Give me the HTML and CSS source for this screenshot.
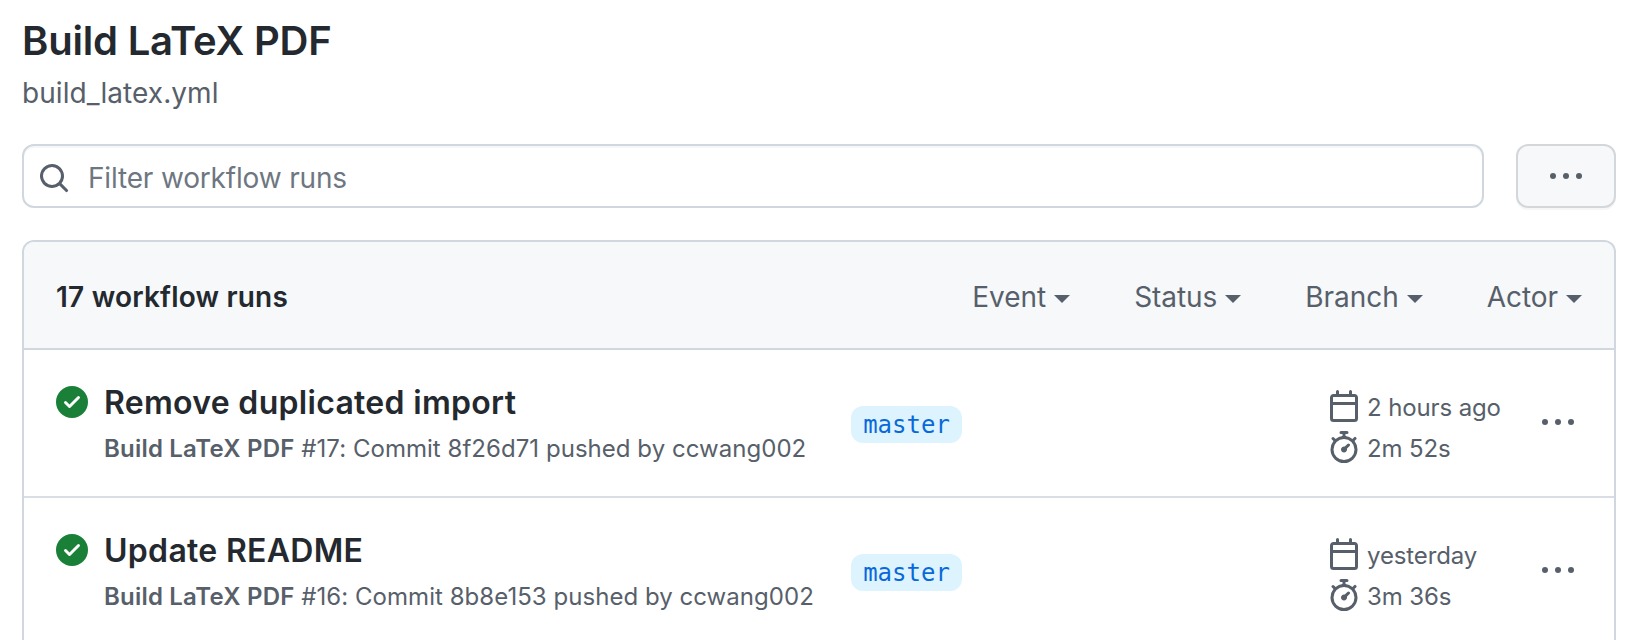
FILE: index.html
```html
<!DOCTYPE html>
<html lang="en">
<head>
<meta charset="utf-8">
<title>Build LaTeX PDF</title>
<link rel="stylesheet" href="styles.css">
</head>
<body>
<svg class="sprite" aria-hidden="true">
  <symbol id="search" viewBox="0 0 16 16"><path fill-rule="evenodd" d="M11.5 7a4.499 4.499 0 11-8.998 0A4.499 4.499 0 0111.5 7zm-.82 4.74a6 6 0 111.06-1.06l3.04 3.04a.75.75 0 11-1.06 1.06l-3.04-3.04z"/></symbol>
  <symbol id="kebab" viewBox="0 0 16 16"><circle cx="1.5" cy="7.5" r="1.5"/><circle cx="8" cy="7.5" r="1.5"/><circle cx="14.5" cy="7.5" r="1.5"/></symbol>
  <symbol id="check" viewBox="0 0 16 16"><path fill-rule="evenodd" d="M8 16A8 8 0 108 0a8 8 0 000 16zm3.78-9.72a.75.75 0 00-1.06-1.06L6.75 9.19 5.28 7.72a.75.75 0 00-1.06 1.06l2 2a.75.75 0 001.06 0l4.5-4.5z"/></symbol>
  <symbol id="calendar" viewBox="0 0 16 16"><path fill-rule="evenodd" d="M4.75 0a.75.75 0 01.75.75V2h5V.75a.75.75 0 011.5 0V2h1.25c.966 0 1.75.784 1.75 1.75v10.5A1.75 1.75 0 0113.250 16H2.75A1.75 1.75 0 011 14.25V3.75C1 2.784 1.784 2 2.75 2H4V.75A.75.75 0 014.75 0zm0 3.5h-2a.25.25 0 00-.25.25V6h11V3.75a.25.25 0 00-.25-.25h-8.5zm8.75 4h-11v6.75c0 .138.112.25.25.25h10.500a.25.25 0 00.25-.25V7.500z"/></symbol>
  <symbol id="stopwatch" viewBox="0 0 16 16"><path fill-rule="evenodd" d="M5.75.75A.75.75 0 016.500 0h3a.75.75 0 010 1.500h-.75v1l-.001.041a6.718 6.718 0 013.464 1.435l.007-.006.75-.75a.75.75 0 111.060 1.060l-.75.75-.006.007a6.750 6.750 0 11-10.548 0L2.720 5.030l-.75-.75a.75.75 0 011.060-1.060l.75.75.007.006A6.718 6.718 0 017.250 2.541V1.500H6.500a.75.75 0 01-.75-.75zM8 14.500A5.250 5.250 0 108 4a5.250 5.250 0 000 10.500zm.389-6.700l1.330-1.330a.75.75 0 111.061 1.060L9.450 8.861A1.502 1.502 0 018 10.750a1.500 1.500 0 11.389-2.950z"/></symbol>
</svg>
<main class="page">
  <h1 class="title">Build LaTeX PDF</h1>
  <p class="file">build_latex.yml</p>
  <div class="toolbar">
    <div class="filter"><svg class="icon"><use href="#search"/></svg><span class="placeholder">Filter workflow runs</span></div>
    <button class="more" aria-label="More"><svg class="icon"><use href="#kebab"/></svg></button>
  </div>
  <section class="box">
    <header class="box-header">
      <strong class="count">17 workflow runs</strong>
      <nav class="menus">
        <span class="menu">Event<i class="caret"></i></span>
        <span class="menu">Status<i class="caret"></i></span>
        <span class="menu">Branch<i class="caret"></i></span>
        <span class="menu">Actor<i class="caret"></i></span>
      </nav>
    </header>
    <article class="run">
      <svg class="icon status"><use href="#check"/></svg>
      <div class="info">
        <h2 class="name">Remove duplicated import</h2>
        <p class="detail"><b class="workflow">Build LaTeX PDF</b> #17: Commit 8f26d71 pushed by ccwang002</p>
      </div>
      <div class="ref"><span class="branch">master</span></div>
      <div class="times">
        <div class="time"><svg class="icon"><use href="#calendar"/></svg><span class="when">2 hours ago</span></div>
        <div class="time"><svg class="icon"><use href="#stopwatch"/></svg><span class="when">2m 52s</span></div>
      </div>
      <svg class="icon actions"><use href="#kebab"/></svg>
    </article>
    <article class="run">
      <svg class="icon status"><use href="#check"/></svg>
      <div class="info">
        <h2 class="name">Update README</h2>
        <p class="detail"><b class="workflow">Build LaTeX PDF</b> #16: Commit 8b8e153 pushed by ccwang002</p>
      </div>
      <div class="ref"><span class="branch">master</span></div>
      <div class="times">
        <div class="time"><svg class="icon"><use href="#calendar"/></svg><span class="when">yesterday</span></div>
        <div class="time"><svg class="icon"><use href="#stopwatch"/></svg><span class="when">3m 36s</span></div>
      </div>
      <svg class="icon actions"><use href="#kebab"/></svg>
    </article>
  </section>
</main>
</body>
</html>
```
FILE: styles.css
```css
* { box-sizing: border-box; }
body { margin: 0; background: #fff; color: #24292f; font-family: Inter, "Liberation Sans", sans-serif; }
h1, h2, p { margin: 0; white-space: nowrap; }
.sprite { display: none; }
.icon { display: block; flex: none; width: 32px; height: 32px; fill: #57606a; }
.page { padding: 16px 24px 0 22px; }
.title { font-size: 40px; font-weight: 600; line-height: 50px; letter-spacing: -.2px; }
.file { margin-top: 6px; color: #57606a; font-size: 28px; line-height: 42px; letter-spacing: .06px; }
.toolbar { display: flex; gap: 32px; margin-top: 30px; }
.filter { display: flex; flex: 1; align-items: center; height: 64px; padding: 3px 0 0 14px; border: 2px solid #d0d7de; border-radius: 12px; box-shadow: inset 0 2px 0 rgba(208, 215, 222, .2); }
.placeholder { margin-left: 18px; color: #6e7781; font-size: 28px; line-height: 40px; letter-spacing: -.17px; }
.more { display: flex; align-items: center; justify-content: center; width: 100px; height: 64px; padding: 2px 0 0; border: 2px solid #d4d7da; border-radius: 12px; background: #f6f8fa; box-shadow: 0 2px 0 rgba(27, 31, 36, .04); }
.box { margin-top: 32px; border: 2px solid #d0d7de; border-bottom: 0; border-radius: 12px 12px 0 0; overflow: hidden; }
.box-header { display: flex; align-items: center; justify-content: space-between; height: 108px; padding: 3px 32px 0; border-bottom: 2px solid #d0d7de; background: #f6f8fa; font-size: 28px; line-height: 42px; }
.count { font-weight: 600; letter-spacing: .2px; }
.menus { display: flex; gap: 64px; color: #57606a; letter-spacing: -.05px; }
.menu { display: flex; align-items: center; }
.caret { margin: 4px 0 0 8px; border: 8px solid transparent; border-top-color: #57606a; border-bottom: 0; }
.run { display: grid; grid-template-columns: 32px 746px 494px 214px 32px; height: 148px; padding: 0 32px; border-bottom: 2px solid #d8dee4; }
.run:last-child { height: 142px; border-bottom: 0; }
.status { margin-top: 36px; fill: #1a7f37; }
.info { padding: 29px 0 0 16px; }
.name { font-size: 32px; font-weight: 600; line-height: 48px; letter-spacing: .3px; }
.detail { margin-top: 4px; color: #57606a; font-size: 24px; line-height: 36px; letter-spacing: .04px; }
.workflow { font-weight: 600; letter-spacing: .2px; }
.ref { padding: 56px 0 0 17px; }
.branch { display: block; width: 111px; height: 37px; border-radius: 12px; background: #ddf4ff; color: #0969da; font-family: "DejaVu Sans Mono", monospace; font-size: 24px; line-height: 38px; text-align: center; }
.times { display: grid; gap: 9px; align-content: start; padding-top: 40px; color: #57606a; font-size: 24px; line-height: 32px; letter-spacing: -.12px; }
.time { display: flex; gap: 7px; height: 32px; white-space: nowrap; }
.when { padding-top: 2px; }
.actions { margin-top: 57px; }
```
